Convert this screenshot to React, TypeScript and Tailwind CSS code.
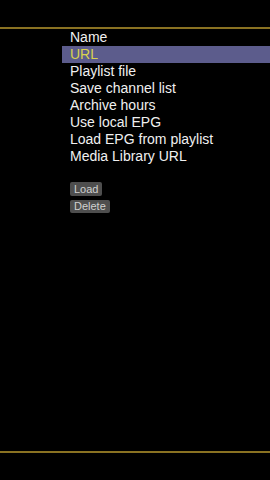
import React from 'react';

// Playlist settings menu
const items = [
    'Name',
    'URL',
    'Playlist file',
    'Save channel list',
    'Archive hours',
    'Use local EPG',
    'Load EPG from playlist',
    'Media Library URL',
];

const App: React.FC = () => {
    const selected = 1;
    return (
        <div
            className="w-[270px] h-[480px] bg-black flex flex-col overflow-hidden"
            style={{ fontFamily: '"Liberation Sans", Arial, sans-serif' }}
        >
            <div className="h-[27px]" />
            <div className="h-[2px] bg-[#8a7222]" />
            <div className="flex-grow flex flex-col pl-[62px]">
                {items.map((item, i) => (
                    <div
                        key={item}
                        className={`h-[17px] pl-[8px] text-[14px] leading-[17px] ${i === selected ? 'bg-[#5c5c8c] text-[#d9d24e]' : 'text-[#f0f0f0]'}`}
                    >
                        {item}
                    </div>
                ))}
                <div className="h-[17px]" />
                <div className="pl-[8px] flex flex-col items-start gap-[4px]">
                    <button className="h-[14px] px-[4px] rounded-[2px] bg-[#4e4e4e] text-[#d0d0d0] text-[11px] leading-[14px]">
                        Load
                    </button>
                    <button className="h-[13px] px-[4px] rounded-[2px] bg-[#4e4e4e] text-[#d0d0d0] text-[11px] leading-[13px]">
                        Delete
                    </button>
                </div>
            </div>
            <div className="h-[2px] bg-[#8a7222]" />
            <div className="h-[27px]" />
        </div>
    );
};

export default App;
